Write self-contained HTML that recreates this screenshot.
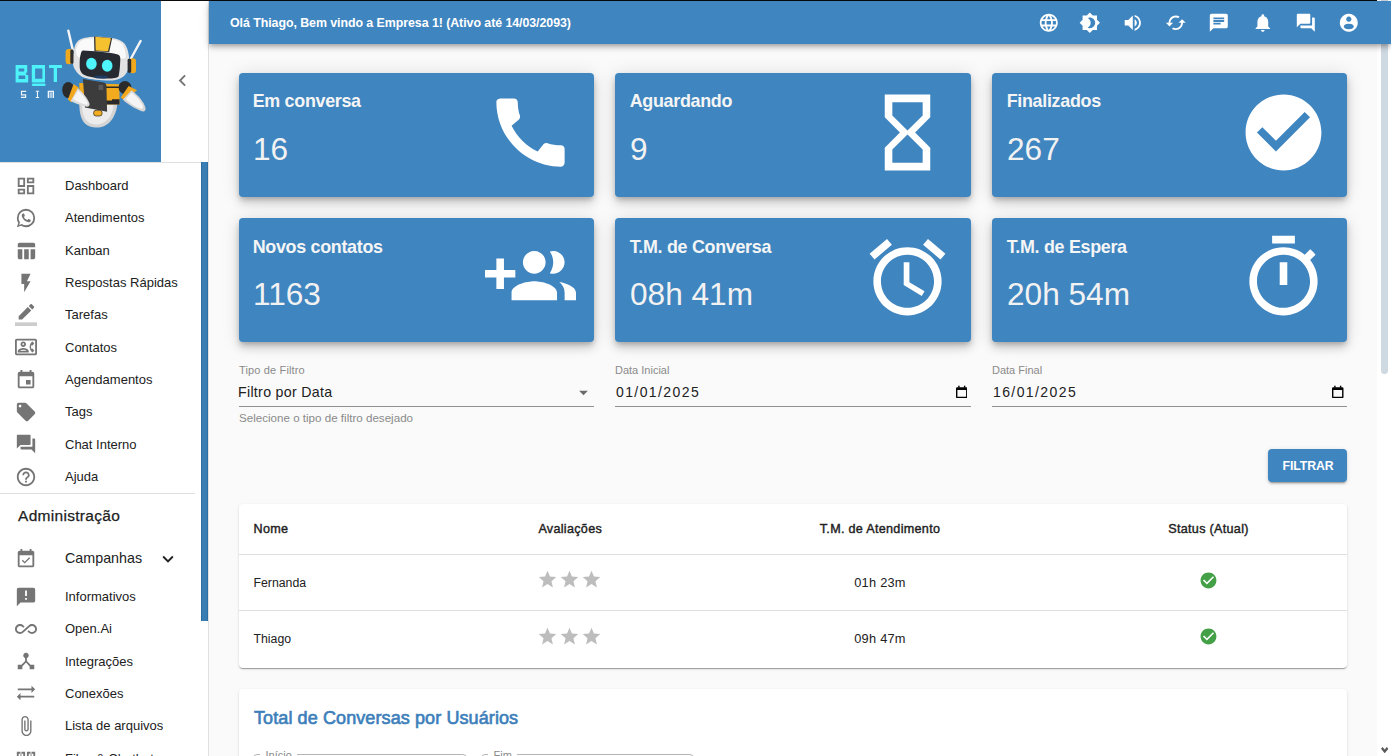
<!DOCTYPE html>
<html><head><meta charset="utf-8">
<style>
*{box-sizing:border-box;margin:0;padding:0}
html,body{width:1391px;height:756px;overflow:hidden;background:#fafafa;font-family:"Liberation Sans",sans-serif;color:#212121}
.abs{position:absolute}
.t{position:absolute;white-space:nowrap;line-height:1}
svg{position:absolute;display:block}
#topline{left:0;top:0;width:1391px;height:1px;background:#0b0b0b}
#appbar{left:209px;top:1px;width:1182px;height:43px;background:#3f85c0;box-shadow:0 2px 4px -1px rgba(0,0,0,.2),0 4px 5px 0 rgba(0,0,0,.14),0 1px 10px 0 rgba(0,0,0,.12);z-index:7}
#side{left:0;top:1px;width:209px;height:755px;background:#fff;border-right:1px solid #e0e0e0;z-index:6}
#logo{left:0;top:0;width:161px;height:161px;background:#3f85c0}
.card{position:absolute;background:#3f85c0;border-radius:4px;box-shadow:0 3px 5px -1px rgba(0,0,0,.2),0 6px 10px 0 rgba(0,0,0,.14),0 1px 18px 0 rgba(0,0,0,.12);color:#fff}
.card .tt{font-size:17.9px;letter-spacing:-0.3px;font-weight:700;color:#f5f5f5}
.card .num{font-size:31.6px;color:#f2f2f2}
.mi{font-size:13px;color:#212121}
.ic{fill:#757575}
</style></head><body>
<div id="topline" class="abs"></div>

<!-- SIDEBAR -->
<div id="side" class="abs">
  <div id="logo" class="abs"><svg style="left:0;top:0" width="161" height="161" viewBox="0 1 161 161">
<rect x="0" y="1" width="161" height="161" fill="#3f85c0"/>
<g fill="#4df3f8">
<path d="M15.6 64.9h11.6v7.6h-1v2.6h2v7.3H15.6zM18.6 68.4v3.2h5.6v-3.2zM18.6 75.6v3.4h6.6v-3.4z" fill-rule="evenodd"/>
<path d="M31.8 64.9h13.2v17.5H31.8zM35.1 68.4v10.4h7.3V68.4z" fill-rule="evenodd"/>
<rect x="31.8" y="83.4" width="13.9" height="2.7" rx="1.3"/>
<path d="M49 64.9h12.9v3H57v14.2h-3.3V67.9H49z"/>
</g>
<g fill="#eef4fa">
<path d="M20.9 90.7h5.3v1.2h-4.1v2.4h4.1V98h-5.3v-1.2h4.1v-1.3h-4.1z"/>
<path d="M35.8 90.7h3.3v1.1h-1.1v5.1h1.1V98h-3.3v-1.1h1.1v-5.1h-1.1z"/>
<path d="M47.7 90.7h6.3V98h-1.3v-6.1h-3.7V98h-1.3z"/>
<rect x="49.4" y="92.3" width="3" height="5.7" fill="#a9c8e4"/>
</g>
<!-- antennas -->
<path d="M68.3 30.6L72.8 50" stroke="#f4f4f4" stroke-width="2.4" stroke-linecap="round"/>
<path d="M140.6 41L131 58.5" stroke="#f4f4f4" stroke-width="2.4" stroke-linecap="round"/>
<!-- body -->
<path d="M79.3 104C79.5 112 80.5 118 84 122.5C88 127 94 128 99 127.5C106 126.5 111 122 113.5 117C116 112 117.2 108 117.1 104z" fill="#d4d4d4"/>
<path d="M82 104C82 111 83 116 86 120C89.5 124 94 125 98 124.5C104 123.5 108 120 110.5 115.5C112.5 111.5 113.5 108 113.5 104z" fill="#ececec"/>
<path d="M79.3 83L119.3 84.2L119.6 104.6L79.5 104.6z" fill="#f2ab1e"/>
<path d="M106 86.6h13.5v1.5H106zM106 100.5h6v-1.3h7.5v5.4H106z" fill="#2a2a2a"/>
<path d="M82.9 78.9L103.6 82.4Q106.4 83 106.4 85.3L107.1 111.7L85 107.4z" fill="#3c3c3c"/>
<rect x="98.6" y="84.8" width="4.6" height="5.2" fill="#5a5a5a"/>
<rect x="93.6" y="110.3" width="8.5" height="5.7" rx="2.5" fill="#f2ac1f" stroke="#2a2a2a" stroke-width="0.7"/>
<!-- arms -->
<ellipse cx="68.2" cy="90" rx="6" ry="8" fill="#2b2b2b"/>
<ellipse cx="125" cy="87.5" rx="6.5" ry="6.5" fill="#2b2b2b"/>
<path d="M67.9 99.6L73.6 83.9L78.6 87.4L71.4 102.4z" fill="#f2a71c"/>
<path d="M120.7 97.4L128.6 86L137.1 90.3L124.3 100.3z" fill="#f2a71c"/>
<path d="M70.7 101L77.9 88.1C83 93 88 99 89.5 103.5C90 106 88 107.5 86 106.5C80 105 74 103 70.7 101z" fill="#dcdcdc"/>
<path d="M73 99L78 90.5C82 94 86 99 87.5 102.5C88 104.5 86.5 105 85 104.5C80 103 76 101 73 99z" fill="#f6f6f6"/>
<path d="M122.9 99.6L131.4 90.3C138 95 144 102 145.5 108C146 111 144 112 141 111C134 108 127 104 122.9 99.6z" fill="#d6d6d6"/>
<path d="M125.5 99L131.5 92.5C137 96.5 141.5 102 143 106.5C143.5 108.5 142 109 140 108.5C134 106 129 102.5 125.5 99z" fill="#f4f4f4"/>
<!-- head -->
<path d="M74.1 49.9C75 43 78 39.5 84 38C90 36.8 100 36.3 111 37.8C118 39 123 41 125.5 45C128.5 50 129.5 57 129.1 63C128.8 69 127.5 72 125 75C121 79 116 80.5 110 80.5C100 80.5 90 79.5 84.6 77.8C79 75.5 75 71 73.3 65.7C72.4 61 72.6 56 74.1 49.9z" fill="#e2e2e2"/>
<path d="M76 50C77 44 80 40.5 85 39.3C92 38 101 37.8 110 39C117 40 121.5 42 123.5 46C125.5 50 126 55 125.5 58C120 60 100 59 78 57C76.5 55 75.8 52.5 76 50z" fill="#fafafa"/>
<path d="M94 36.6L112.2 37.9L109.2 52L94.4 51.2z" fill="#333"/>
<path d="M95.3 36.8L111 38.2L108 51.2L95.7 50.5z" fill="#f5c12e"/>
<!-- ears -->
<rect x="65.6" y="49" width="7" height="15.3" rx="3.2" fill="#f0a81d"/>
<rect x="70.3" y="49.6" width="3.2" height="14.2" rx="1.4" fill="#2e2e2e"/>
<rect x="129.6" y="58.2" width="6.4" height="15" rx="3" fill="#f0a81d"/>
<rect x="127.6" y="58.8" width="3.6" height="14" rx="1.4" fill="#2e2e2e"/>
<!-- visor -->
<path d="M83.1 50.6C92 50.8 108 52.3 117.8 54.4C120 55 120.5 57 120.3 60C120 66 119.8 71 118.6 76.3C117.5 78.5 110 78.8 103.5 78.5C96 78.2 88 77 83.9 74.8C80.5 72.5 79.6 69 79.7 65.7C79.6 61 79.8 57 80.9 53.6C81.4 51.6 82 50.6 83.1 50.6z" fill="#272a30"/>
<ellipse cx="101" cy="77" rx="7" ry="1.6" fill="#1d3d66"/>
<ellipse cx="91.4" cy="63.8" rx="5.3" ry="6" fill="#4ef4fa"/>
<ellipse cx="107.2" cy="65.7" rx="5.3" ry="6" fill="#4ef4fa"/>
</svg></div>
  <svg style="left:170.6px;top:68px" width="23" height="23" viewBox="0 0 24 24"><path fill="#757575" d="M15.41 7.41L14 6l-6 6 6 6 1.41-1.41L10.83 12z"/></svg>
  <div class="abs" style="left:0;top:161px;width:201px;height:1px;background:#e0e0e0"></div>
  <div class="abs" style="left:201px;top:161px;width:7px;height:459px;background:#3a7db3;box-shadow:inset 1px 0 0 #2c6ea2,inset -1px 0 0 #2c6ea2"></div>
  <svg style="left:15px;top:173.60px" width="22" height="22" viewBox="0 0 24 24"><path class="ic" d="M19 5v2h-4V5h4M9 5v6H5V5h4m10 8v6h-4v-6h4M9 17v2H5v-2h4M21 3h-8v6h8V3zM11 3H3v10h8V3zm10 8h-8v10h8V11zm-10 4H3v6h8v-6z"/></svg>
  <div class="t mi" style="left:65px;top:178.00px">Dashboard</div>
  <svg style="left:15px;top:205.93px" width="22" height="22" viewBox="0 0 24 24"><path class="ic" d="M16.75 13.96c.25.13.41.2.46.3.06.11.04.61-.21 1.18-.2.56-1.24 1.1-1.7 1.12-.46.02-.47.36-2.96-.73-2.49-1.09-3.99-3.75-4.11-3.92-.12-.17-.96-1.38-.92-2.61.05-1.22.69-1.8.95-2.04.24-.26.51-.29.68-.26h.47c.15 0 .36-.06.55.45l.69 1.87c.06.13.1.28.01.44l-.27.41-.39.42c-.12.12-.26.25-.12.5.12.26.62 1.09 1.32 1.78.91.88 1.71 1.17 1.95 1.3.24.14.39.12.54-.04l.81-.94c.19-.25.35-.19.58-.11l1.67.88M12 2a10 10 0 0 1 10 10 10 10 0 0 1-10 10c-1.97 0-3.8-.57-5.35-1.55L2 22l1.55-4.65A9.969 9.969 0 0 1 2 12 10 10 0 0 1 12 2m0 2a8 8 0 0 0-8 8c0 1.72.54 3.31 1.46 4.61L4.5 19.5l2.89-.96A7.95 7.95 0 0 0 12 20a8 8 0 0 0 8-8 8 8 0 0 0-8-8z"/></svg>
  <div class="t mi" style="left:65px;top:210.33px">Atendimentos</div>
  <svg style="left:15px;top:239.06px" width="22" height="22" viewBox="0 0 24 24"><path class="ic" d="M10 10.02h5V21h-5zM17 21h3c1.1 0 2-.9 2-2v-9h-5v11zm3-18H5c-1.1 0-2 .9-2 2v3h19V5c0-1.1-.9-2-2-2zM3 19c0 1.1.9 2 2 2h3V10H3v9z"/></svg>
  <div class="t mi" style="left:65px;top:242.66px">Kanban</div>
  <svg style="left:15px;top:270.59px" width="22" height="22" viewBox="0 0 24 24"><path class="ic" d="M7 2v11h3v9l7-12h-4l4-8z"/></svg>
  <div class="t mi" style="left:65px;top:274.99px">Respostas Rápidas</div>
  <svg style="left:15px;top:302.92px" width="22" height="22" viewBox="0 0 24 24"><path class="ic" d="M17.75 7L14 3.25l-10 10V17h3.75l10-10zm2.96-2.96c.39-.39.39-1.02 0-1.41L18.37.29a.9959.9959 0 0 0-1.41 0L15 2.25 18.75 6l1.96-1.96z"/><path fill="#757575" fill-opacity=".36" d="M0 20h24v4H0z"/></svg>
  <div class="t mi" style="left:65px;top:307.32px">Tarefas</div>
  <svg style="left:15px;top:335.25px" width="22" height="22" viewBox="0 0 24 24"><path class="ic" d="M22 3H2C.9 3 0 3.9 0 5v14c0 1.1.9 2 2 2h20c1.1 0 1.99-.9 1.99-2L24 5c0-1.1-.9-2-2-2zm0 16H2V5h20v14zm-2.99-1.01L21 16l-1.51-2h-1.64c-.22-.63-.35-1.3-.35-2s.13-1.37.35-2h1.64L21 8l-1.99-1.99C17.7 6.99 16.73 8.38 16.28 10c-.18.64-.28 1.31-.28 2s.1 1.36.28 2c.45 1.61 1.42 3.01 2.73 3.99zM9 12c1.65 0 3-1.35 3-3s-1.35-3-3-3-3 1.35-3 3 1.35 3 3 3zm0-4c.55 0 1 .45 1 1s-.45 1-1 1-1-.45-1-1 .45-1 1-1zm6 8.59c0-2.5-3.97-3.58-6-3.58s-6 1.07-6 3.58V18h12v-1.41zM5.48 16c.74-.5 2.22-1 3.52-1s2.77.49 3.52 1H5.48z"/></svg>
  <div class="t mi" style="left:65px;top:339.65px">Contatos</div>
  <svg style="left:15px;top:367.58px" width="22" height="22" viewBox="0 0 24 24"><path class="ic" d="M17 12h-5v5h5v-5zM16 1v2H8V1H6v2H5c-1.11 0-1.99.9-1.99 2L3 19c0 1.1.89 2 2 2h14c1.1 0 2-.9 2-2V5c0-1.1-.9-2-2-2h-1V1h-2zm3 18H5V8h14v11z"/></svg>
  <div class="t mi" style="left:65px;top:371.98px">Agendamentos</div>
  <svg style="left:15px;top:399.91px" width="22" height="22" viewBox="0 0 24 24"><path class="ic" d="M21.41 11.58l-9-9C12.05 2.22 11.55 2 11 2H4c-1.1 0-2 .9-2 2v7c0 .55.22 1.05.59 1.42l9 9c.36.36.86.58 1.41.58.55 0 1.05-.22 1.41-.59l7-7c.37-.36.59-.86.59-1.41 0-.55-.23-1.06-.59-1.42zM5.5 7C4.67 7 4 6.33 4 5.5S4.67 4 5.5 4 7 4.67 7 5.5 6.33 7 5.5 7z"/></svg>
  <div class="t mi" style="left:65px;top:404.31px">Tags</div>
  <svg style="left:15px;top:432.24px" width="22" height="22" viewBox="0 0 24 24"><path class="ic" d="M21 6h-2v9H6v2c0 .55.45 1 1 1h11l4 4V7c0-.55-.45-1-1-1zm-4 6V3c0-.55-.45-1-1-1H3c-.55 0-1 .45-1 1v14l4-4h10c.55 0 1-.45 1-1z"/></svg>
  <div class="t mi" style="left:65px;top:436.64px">Chat Interno</div>
  <svg style="left:15px;top:464.57px" width="22" height="22" viewBox="0 0 24 24"><path class="ic" d="M11 18h2v-2h-2v2zm1-16C6.48 2 2 6.48 2 12s4.48 10 10 10 10-4.48 10-10S17.52 2 12 2zm0 18c-4.41 0-8-3.59-8-8s3.59-8 8-8 8 3.59 8 8-3.59 8-8 8zm0-14c-2.21 0-4 1.79-4 4h2c0-1.1.9-2 2-2s2 .9 2 2c0 2-3 1.75-3 5h2c0-2.25 3-2.5 3-5 0-2.21-1.79-4-4-4z"/></svg>
  <div class="t mi" style="left:65px;top:468.97px">Ajuda</div>
  <div class="abs" style="left:0;top:492px;width:195px;height:1px;background:#e0e0e0"></div>
  <div class="t" style="left:18px;top:507.18px;font-size:15.5px;color:#212121;-webkit-text-stroke:0.25px #212121;letter-spacing:0.3px">Administração</div>
  <svg style="left:15px;top:546.80px" width="22" height="22" viewBox="0 0 24 24"><path class="ic" d="M16.53 11.06L15.47 10l-4.88 4.88-2.12-2.12-1.06 1.06L10.59 17l5.94-5.94zM19 3h-1V1h-2v2H8V1H6v2H5c-1.11 0-1.99.9-1.99 2L3 19c0 1.1.89 2 2 2h14c1.1 0 2-.9 2-2V5c0-1.1-.9-2-2-2zm0 16H5V8h14v11z"/></svg>
  <div class="t" style="left:65px;top:549.70px;font-size:14.3px;color:#212121">Campanhas</div>
  <svg style="left:157px;top:547.00px" width="22" height="22" viewBox="0 0 24 24"><path fill="#212121" d="M16.59 8.59L12 13.17 7.41 8.59 6 10l6 6 6-6z"/></svg>
  <svg style="left:15px;top:584.80px" width="22" height="22" viewBox="0 0 24 24"><path class="ic" d="M20 2H4c-1.1 0-1.99.9-1.99 2L2 22l4-4h14c1.1 0 2-.9 2-2V4c0-1.1-.9-2-2-2zm-7 9h-2V5h2v6zm0 4h-2v-2h2v2z"/></svg>
  <div class="t mi" style="left:65px;top:589.40px">Informativos</div>
  <svg style="left:15px;top:617.00px" width="22" height="22" viewBox="0 0 24 24"><path class="ic" d="M18.6 6.62c-1.44 0-2.8.56-3.77 1.53L12 10.66 10.48 12h.01L7.8 14.39c-.64.64-1.49.99-2.4.99-1.87 0-3.39-1.51-3.39-3.38S3.53 8.62 5.4 8.62c.91 0 1.76.35 2.44 1.03l1.13 1 1.51-1.34L9.22 8.2C8.2 7.18 6.84 6.62 5.4 6.62 2.42 6.62 0 9.04 0 12s2.42 5.38 5.4 5.38c1.44 0 2.8-.56 3.77-1.53l2.83-2.5.01.01L13.52 12h-.01l2.69-2.39c.64-.64 1.49-.99 2.4-.99 1.87 0 3.39 1.51 3.39 3.38s-1.52 3.38-3.39 3.38c-.9 0-1.76-.35-2.44-1.03l-1.14-1.01-1.51 1.34 1.27 1.12c1.02 1.01 2.37 1.57 3.82 1.57 2.98 0 5.4-2.41 5.4-5.38s-2.42-5.37-5.4-5.37z"/></svg>
  <div class="t mi" style="left:65px;top:620.90px">Open.Ai</div>
  <svg style="left:15px;top:649.20px" width="22" height="22" viewBox="0 0 24 24"><path class="ic" d="M17 16l-4-4V8.82C14.16 8.4 15 7.3 15 6c0-1.66-1.34-3-3-3S9 4.34 9 6c0 1.3.84 2.4 2 2.82V12l-4 4H3v5h5v-3.05l4-4.2 4 4.2V21h5v-5h-4z"/></svg>
  <div class="t mi" style="left:65px;top:653.80px">Integrações</div>
  <svg style="left:15px;top:681.40px" width="22" height="22" viewBox="0 0 24 24"><path class="ic" d="M22 8l-4-4v3H3v2h15v3l4-4zM2 16l4 4v-3h15v-2H6v-3l-4 4z"/></svg>
  <div class="t mi" style="left:65px;top:686.00px">Conexões</div>
  <svg style="left:15px;top:713.60px" width="22" height="22" viewBox="0 0 24 24"><path class="ic" d="M16.5 6v11.5c0 2.21-1.79 4-4 4s-4-1.79-4-4V5c0-1.38 1.12-2.5 2.5-2.5s2.5 1.12 2.5 2.5v10.5c0 .55-.45 1-1 1s-1-.45-1-1V6H10v9.5c0 1.38 1.12 2.5 2.5 2.5s2.5-1.12 2.5-2.5V5c0-2.21-1.79-4-4-4S7 2.79 7 5v12.5c0 3.04 2.46 5.5 5.5 5.5s5.5-2.46 5.5-5.5V6h-1.5z"/></svg>
  <div class="t mi" style="left:65px;top:718.20px">Lista de arquivos</div>
  <svg style="left:15px;top:749px" width="22" height="22" viewBox="0 0 24 24"><path class="ic" d="M2 2h9v20H2zM4 4v16h5V4zM13 2h9v20h-9zM15 4v16h5V4zM6 2h1v5H6zM17 2h1v5h-1z" fill-rule="evenodd"/></svg>
  <div class="t mi" style="left:65px;top:751.4px">Files &amp; Chatbot</div>
</div>

<!-- APPBAR -->
<div id="appbar" class="abs">
  <div class="t" style="left:21px;top:16px;font-size:12.4px;font-weight:700;color:#fff;letter-spacing:-0.06px">Olá Thiago, Bem vindo a Empresa 1! (Ativo até 14/03/2093)</div>
  <svg style="left:828.90px;top:10.70px" width="21.6" height="21.6" viewBox="0 0 24 24"><path fill="#fff" d="M11.99 2C6.47 2 2 6.48 2 12s4.47 10 9.99 10C17.52 22 22 17.52 22 12S17.52 2 11.99 2zm6.93 6h-2.95c-.32-1.25-.78-2.45-1.38-3.56 1.84.63 3.37 1.91 4.33 3.56zM12 4.04c.83 1.2 1.48 2.53 1.91 3.96h-3.82c.43-1.43 1.08-2.76 1.91-3.96zM4.26 14C4.1 13.36 4 12.69 4 12s.1-1.36.26-2h3.38c-.08.66-.14 1.32-.14 2 0 .68.06 1.34.14 2H4.26zm.82 2h2.95c.32 1.25.78 2.45 1.38 3.56-1.84-.63-3.37-1.9-4.33-3.56zm2.95-8H5.08c.96-1.66 2.49-2.93 4.33-3.56C8.81 5.55 8.35 6.75 8.03 8zM12 19.96c-.83-1.2-1.48-2.53-1.91-3.96h3.82c-.43 1.43-1.08 2.76-1.91 3.96zM14.34 14H9.66c-.09-.66-.16-1.32-.16-2 0-.68.07-1.35.16-2h4.68c.09.65.16 1.32.16 2 0 .68-.07 1.34-.16 2zm.25 5.56c.6-1.11 1.06-2.31 1.38-3.56h2.95c-.96 1.65-2.49 2.93-4.33 3.56zM16.36 14c.08-.66.14-1.32.14-2 0-.68-.06-1.34-.14-2h3.38c.16.64.26 1.31.26 2s-.1 1.36-.26 2h-3.38z"/></svg>
  <svg style="left:869.90px;top:10.70px" width="21.6" height="21.6" viewBox="0 0 24 24"><path fill="#fff" d="M20 8.69V4h-4.69L12 .69 8.69 4H4v4.69L.69 12 4 15.31V20h4.69L12 23.31 15.31 20H20v-4.69L23.31 12 20 8.69zM12 18c-.89 0-1.74-.2-2.5-.55C11.56 16.5 13 14.42 13 12s-1.44-4.5-3.5-5.45C10.26 6.2 11.11 6 12 6c3.31 0 6 2.69 6 6s-2.69 6-6 6z"/></svg>
  <svg style="left:912.90px;top:10.70px" width="21.6" height="21.6" viewBox="0 0 24 24"><path fill="#fff" d="M3 9v6h4l5 5V4L7 9H3zm13.5 3c0-1.77-1.02-3.29-2.5-4.03v8.05c1.48-.73 2.5-2.25 2.5-4.02zM14 3.23v2.06c2.89.86 5 3.54 5 6.71s-2.11 5.85-5 6.71v2.06c4.01-.91 7-4.49 7-8.77s-2.99-7.86-7-8.77z"/></svg>
  <svg style="left:955.90px;top:10.70px" width="21.6" height="21.6" viewBox="0 0 24 24"><path fill="#fff" d="M19 8l-4 4h3c0 3.31-2.69 6-6 6-1.01 0-1.97-.25-2.8-.7l-1.46 1.46C8.97 19.54 10.43 20 12 20c4.42 0 8-3.58 8-8h3l-4-4zM6 12c0-3.31 2.69-6 6-6 1.01 0 1.97.25 2.8.7l1.46-1.46C15.03 4.46 13.57 4 12 4c-4.42 0-8 3.58-8 8H1l4 4 4-4H6z"/></svg>
  <svg style="left:998.90px;top:10.70px" width="21.6" height="21.6" viewBox="0 0 24 24"><path fill="#fff" d="M20 2H4c-1.1 0-1.99.9-1.99 2L2 22l4-4h14c1.1 0 2-.9 2-2V4c0-1.1-.9-2-2-2zM6 9h12v2H6V9zm8 5H6v-2h8v2zm4-6H6V6h12v2z"/></svg>
  <svg style="left:1043.00px;top:10.70px" width="21.6" height="21.6" viewBox="0 0 24 24"><path fill="#fff" d="M12 22c1.1 0 2-.9 2-2h-4c0 1.1.89 2 2 2zm6-6v-5c0-3.07-1.64-5.64-4.5-6.32V4c0-.83-.67-1.5-1.5-1.5s-1.5.67-1.5 1.5v.68C7.63 5.36 6 7.92 6 11v5l-2 2v1h16v-1l-2-2z"/></svg>
  <svg style="left:1086.20px;top:10.70px" width="21.6" height="21.6" viewBox="0 0 24 24"><path fill="#fff" d="M21 6h-2v9H6v2c0 .55.45 1 1 1h11l4 4V7c0-.55-.45-1-1-1zm-4 6V3c0-.55-.45-1-1-1H3c-.55 0-1 .45-1 1v14l4-4h10c.55 0 1-.45 1-1z"/></svg>
  <svg style="left:1129.00px;top:10.70px" width="21.6" height="21.6" viewBox="0 0 24 24"><path fill="#fff" d="M12 2a10 10 0 1 0 0.001 0zM12 5.1a2.9 2.9 0 1 0 0.001 0zM12 13a5.5 3.1 0 1 0 0.001 0z" fill-rule="evenodd"/></svg>
</div>

<!-- CARDS -->
<div class="card" style="left:239px;top:73px;width:355px;height:124px">
  <div class="t tt" style="left:13.7px;top:20px">Em conversa</div>
  <svg style="left:246.0px;top:13.5px" width="91" height="91" viewBox="0 0 24 24"><path fill="#fff" d="M20.01 15.38c-1.23 0-2.42-.2-3.53-.56-.35-.12-.74-.03-1.01.24l-1.57 1.97c-2.83-1.35-5.48-3.9-6.89-6.83l1.95-1.66c.27-.28.35-.67.24-1.02-.37-1.11-.56-2.3-.56-3.53 0-.54-.45-.99-.99-.99H4.19C3.65 3 3 3.24 3 3.99 3 13.28 10.73 21 20.01 21c.71 0 .99-.63.99-1.18v-3.45c0-.54-.45-.99-.99-.99z"/></svg>
  <div class="t num" style="left:14px;top:60.6px">16</div>
</div>
<div class="card" style="left:615px;top:73px;width:356px;height:124px">
  <div class="t tt" style="left:14.7px;top:20px">Aguardando</div>
  <svg style="left:247.0px;top:13.5px" width="91" height="91" viewBox="0 0 24 24"><path fill="#fff" d="M6 2v6h.01L6 8.01 10 12l-4 4 .01.01H6V22h12v-5.99h-.01L18 16l-4-4 4-3.99-.01-.01H18V2H6zm10 14.5V20H8v-3.5l4-4 4 4zm-4-5l-4-4V4h8v3.5l-4 4z"/></svg>
  <div class="t num" style="left:15px;top:60.6px">9</div>
</div>
<div class="card" style="left:992px;top:73px;width:355px;height:124px">
  <div class="t tt" style="left:14.7px;top:20px">Finalizados</div>
  <svg style="left:246.0px;top:13.5px" width="91" height="91" viewBox="0 0 24 24"><path fill="#fff" d="M12 2C6.48 2 2 6.48 2 12s4.48 10 10 10 10-4.48 10-10S17.52 2 12 2zm-2 15l-5-5 1.41-1.41L10 14.17l7.59-7.59L19 8l-9 9z"/></svg>
  <div class="t num" style="left:15px;top:60.6px">267</div>
</div>
<div class="card" style="left:239px;top:218px;width:355px;height:124px">
  <div class="t tt" style="left:13.7px;top:20.8px">Novos contatos</div>
  <svg style="left:246.0px;top:13.5px" width="91" height="91" viewBox="0 0 24 24"><path fill="#fff" d="M8 10H5V7H3v3H0v2h3v3h2v-3h3v-2zm10 1c1.66 0 2.99-1.34 2.99-3S19.66 5 18 5c-.32 0-.63.05-.91.14.57.81.9 1.79.9 2.86s-.34 2.04-.9 2.86c.28.09.59.14.91.14zm-5 0c1.66 0 2.99-1.34 2.99-3S14.66 5 13 5c-1.66 0-3 1.34-3 3s1.34 3 3 3zm6.62 2.16c.83.73 1.38 1.66 1.38 2.84v2h3v-2c0-1.54-2.37-2.49-4.38-2.84zM13 13c-2 0-6 1-6 3v2h12v-2c0-2-4-3-6-3z"/></svg>
  <div class="t num" style="left:14px;top:60.6px">1163</div>
</div>
<div class="card" style="left:615px;top:218px;width:356px;height:124px">
  <div class="t tt" style="left:14.7px;top:20.8px">T.M. de Conversa</div>
  <svg style="left:247.0px;top:13.5px" width="91" height="91" viewBox="0 0 24 24"><path fill="#fff" d="M22 5.72l-4.6-3.86-1.29 1.53 4.6 3.86L22 5.72zM7.88 3.39L6.6 1.86 2 5.71l1.29 1.53 4.59-3.85zM12.5 8H11v6l4.75 2.85.75-1.23-4-2.37V8zM12 4c-4.97 0-9 4.03-9 9s4.02 9 9 9c4.97 0 9-4.03 9-9s-4.03-9-9-9zm0 16c-3.87 0-7-3.13-7-7s3.13-7 7-7 7 3.13 7 7-3.13 7-7 7z"/></svg>
  <div class="t num" style="left:15px;top:60.6px">08h 41m</div>
</div>
<div class="card" style="left:992px;top:218px;width:355px;height:124px">
  <div class="t tt" style="left:14.7px;top:20.8px">T.M. de Espera</div>
  <svg style="left:246.0px;top:13.5px" width="91" height="91" viewBox="0 0 24 24"><path fill="#fff" d="M15 1H9v2h6V1zm-4 13h2V8h-2v6zm8.03-6.61l1.42-1.42c-.43-.51-.9-.99-1.41-1.41l-1.42 1.42C16.07 4.74 14.12 4 12 4c-4.97 0-9 4.03-9 9s4.02 9 9 9 9-4.03 9-9c0-2.12-.74-4.07-1.97-5.61zM12 20c-3.87 0-7-3.13-7-7s3.13-7 7-7 7 3.13 7 7-3.13 7-7 7z"/></svg>
  <div class="t num" style="left:15px;top:60.6px">20h 54m</div>
</div>

<div class="t" style="left:239px;top:365.29px;font-size:11px;font-weight:400;color:#8a8a8a;letter-spacing:0.15px">Tipo de Filtro</div>
<div class="t" style="left:615px;top:365.29px;font-size:11px;font-weight:400;color:#8a8a8a;">Data Inicial</div>
<div class="t" style="left:992px;top:365.29px;font-size:11px;font-weight:400;color:#8a8a8a;">Data Final</div>
<div class="t" style="left:239px;top:384.88px;font-size:14.2px;font-weight:400;color:#212121;letter-spacing:0.3px;margin-left:-1px">Filtro por Data</div>
<svg style="left:572.7px;top:382.3px" width="21" height="21" viewBox="0 0 24 24"><path fill="#6b6b6b" d="M7 10l5 5 5-5z"/></svg>
<div class="t" style="left:616px;top:385.05px;font-size:14px;font-weight:400;color:#212121;letter-spacing:1.4px">01/01/2025</div>
<div class="t" style="left:993px;top:385.05px;font-size:14px;font-weight:400;color:#212121;letter-spacing:1.4px">16/01/2025</div>
<svg style="left:955.7px;top:384.8px" width="11.5" height="13.2" viewBox="0 0 11.5 13.2"><path fill="#000" fill-rule="evenodd" d="M1.3 2.2H10.2A1.3 1.3 0 0 1 11.5 3.5V11.9A1.3 1.3 0 0 1 10.2 13.2H1.3A1.3 1.3 0 0 1 0 11.9V3.5A1.3 1.3 0 0 1 1.3 2.2zM1.4 5V11.8H10.1V5z"/><rect x="2.2" y="0.7" width="1.4" height="2" fill="#000"/><rect x="7.9" y="0.7" width="1.4" height="2" fill="#000"/></svg>
<svg style="left:1332.3px;top:384.8px" width="11.5" height="13.2" viewBox="0 0 11.5 13.2"><path fill="#000" fill-rule="evenodd" d="M1.3 2.2H10.2A1.3 1.3 0 0 1 11.5 3.5V11.9A1.3 1.3 0 0 1 10.2 13.2H1.3A1.3 1.3 0 0 1 0 11.9V3.5A1.3 1.3 0 0 1 1.3 2.2zM1.4 5V11.8H10.1V5z"/><rect x="2.2" y="0.7" width="1.4" height="2" fill="#000"/><rect x="7.9" y="0.7" width="1.4" height="2" fill="#000"/></svg>
<div class="abs" style="left:239px;top:406px;width:355px;height:1px;background:#8f8f8f"></div>
<div class="abs" style="left:615px;top:406px;width:356px;height:1px;background:#8f8f8f"></div>
<div class="abs" style="left:992px;top:406px;width:355px;height:1px;background:#8f8f8f"></div>
<div class="t" style="left:239px;top:411.88px;font-size:11.6px;font-weight:400;color:#8a8a8a;">Selecione o tipo de filtro desejado</div>
<div class="abs" style="left:1268px;top:449px;width:79px;height:33px;background:#3f85c0;border-radius:4px;box-shadow:0 3px 1px -2px rgba(0,0,0,.2),0 2px 2px 0 rgba(0,0,0,.14),0 1px 5px 0 rgba(0,0,0,.12)"></div>
<div class="t" style="left:1008px;width:600px;text-align:center;top:459.8px;font-size:12.3px;font-weight:700;color:#fff;letter-spacing:-0.1px">FILTRAR</div>
<div class="abs" style="left:239px;top:504px;width:1108px;height:164px;background:#fff;border-radius:4px;box-shadow:0 2px 1px -1px rgba(0,0,0,.2),0 1px 1px 0 rgba(0,0,0,.14),0 1px 3px 0 rgba(0,0,0,.12)"></div>
<div class="abs" style="left:239px;top:554px;width:1108px;height:1px;background:#e0e0e0"></div>
<div class="abs" style="left:239px;top:610px;width:1108px;height:1px;background:#e0e0e0"></div>
<div class="t" style="left:253.5px;top:523.33px;font-size:12.6px;font-weight:400;color:#212121;-webkit-text-stroke:0.4px #212121;letter-spacing:0.3px;">Nome</div>
<div class="t" style="left:538.4px;top:523.33px;font-size:12.6px;font-weight:400;color:#212121;-webkit-text-stroke:0.4px #212121;letter-spacing:0.3px;">Avaliações</div>
<div class="t" style="left:580px;width:600px;text-align:center;top:523.33px;font-size:12.6px;font-weight:400;color:#212121;-webkit-text-stroke:0.4px #212121;letter-spacing:0.3px;">T.M. de Atendimento</div>
<div class="t" style="left:908.5px;width:600px;text-align:center;top:523.33px;font-size:12.6px;font-weight:400;color:#212121;-webkit-text-stroke:0.4px #212121;letter-spacing:0.3px;">Status (Atual)</div>
<div class="t" style="left:253.5px;top:576.59px;font-size:12.3px;font-weight:400;color:#212121;">Fernanda</div>
<div class="t" style="left:580px;width:600px;text-align:center;top:577.16px;font-size:12.8px;font-weight:400;color:#212121;letter-spacing:0.25px">01h 23m</div>
<svg style="left:537.2px;top:569.0px" width="21" height="21" viewBox="0 0 24 24"><path fill="#bdbdbd" d="M12 17.27L18.18 21l-1.64-7.03L22 9.24l-7.19-.61L12 2 9.19 8.63 2 9.24l5.46 4.73L5.82 21z"/></svg>
<svg style="left:559.2px;top:569.0px" width="21" height="21" viewBox="0 0 24 24"><path fill="#bdbdbd" d="M12 17.27L18.18 21l-1.64-7.03L22 9.24l-7.19-.61L12 2 9.19 8.63 2 9.24l5.46 4.73L5.82 21z"/></svg>
<svg style="left:581.2px;top:569.0px" width="21" height="21" viewBox="0 0 24 24"><path fill="#bdbdbd" d="M12 17.27L18.18 21l-1.64-7.03L22 9.24l-7.19-.61L12 2 9.19 8.63 2 9.24l5.46 4.73L5.82 21z"/></svg>
<svg style="left:1199.2px;top:570.8px" width="19" height="19" viewBox="0 0 24 24"><path fill="#43a047" d="M12 2C6.48 2 2 6.48 2 12s4.48 10 10 10 10-4.48 10-10S17.52 2 12 2zm-2 15l-5-5 1.41-1.41L10 14.17l7.59-7.59L19 8l-9 9z"/></svg>
<div class="t" style="left:253.5px;top:632.79px;font-size:12.3px;font-weight:400;color:#212121;">Thiago</div>
<div class="t" style="left:580px;width:600px;text-align:center;top:633.36px;font-size:12.8px;font-weight:400;color:#212121;letter-spacing:0.25px">09h 47m</div>
<svg style="left:537.2px;top:626.1px" width="21" height="21" viewBox="0 0 24 24"><path fill="#bdbdbd" d="M12 17.27L18.18 21l-1.64-7.03L22 9.24l-7.19-.61L12 2 9.19 8.63 2 9.24l5.46 4.73L5.82 21z"/></svg>
<svg style="left:559.2px;top:626.1px" width="21" height="21" viewBox="0 0 24 24"><path fill="#bdbdbd" d="M12 17.27L18.18 21l-1.64-7.03L22 9.24l-7.19-.61L12 2 9.19 8.63 2 9.24l5.46 4.73L5.82 21z"/></svg>
<svg style="left:581.2px;top:626.1px" width="21" height="21" viewBox="0 0 24 24"><path fill="#bdbdbd" d="M12 17.27L18.18 21l-1.64-7.03L22 9.24l-7.19-.61L12 2 9.19 8.63 2 9.24l5.46 4.73L5.82 21z"/></svg>
<svg style="left:1199.2px;top:627.0px" width="19" height="19" viewBox="0 0 24 24"><path fill="#43a047" d="M12 2C6.48 2 2 6.48 2 12s4.48 10 10 10 10-4.48 10-10S17.52 2 12 2zm-2 15l-5-5 1.41-1.41L10 14.17l7.59-7.59L19 8l-9 9z"/></svg>
<div class="abs" style="left:239px;top:689px;width:1108px;height:120px;background:#fff;border-radius:4px;box-shadow:0 2px 1px -1px rgba(0,0,0,.2),0 1px 1px 0 rgba(0,0,0,.14),0 1px 3px 0 rgba(0,0,0,.12)"></div>
<div class="t" style="left:254px;top:708.56px;font-size:18px;font-weight:400;color:#3d7fba;letter-spacing:0.1px;-webkit-text-stroke:0.65px #3d7fba">Total de Conversas por Usuários</div>
<div class="abs" style="left:253px;top:754px;width:214px;height:30px;border:1px solid #b5b5b5;border-radius:4px"></div>
<div class="abs" style="left:260px;top:752px;width:37px;height:4px;background:#fff"></div>
<div class="t" style="left:265.5px;top:750.2px;font-size:11px;font-weight:400;color:#8a8a8a;">Início</div>
<div class="abs" style="left:481px;top:754px;width:213px;height:30px;border:1px solid #b5b5b5;border-radius:4px"></div>
<div class="abs" style="left:488px;top:752px;width:29px;height:4px;background:#fff"></div>
<div class="t" style="left:493.5px;top:750.2px;font-size:11px;font-weight:400;color:#8a8a8a;">Fim</div>
<div class="abs" style="left:1377px;top:0;width:14px;height:756px;background:#fff;z-index:4"></div>
<div class="abs" style="left:1381px;top:-20px;width:7px;height:394px;background:#cfd9e2;border-radius:4px;z-index:4"></div>
<svg style="left:1380.7px;top:746.7px;z-index:4" width="7.4" height="6.3" viewBox="0 0 7.4 6.3"><path fill="#5a5a5a" d="M0 1.7L1.6 0 3.7 2.4 5.8 0 7.4 1.7 3.7 6.3z"/></svg>
</body></html>
